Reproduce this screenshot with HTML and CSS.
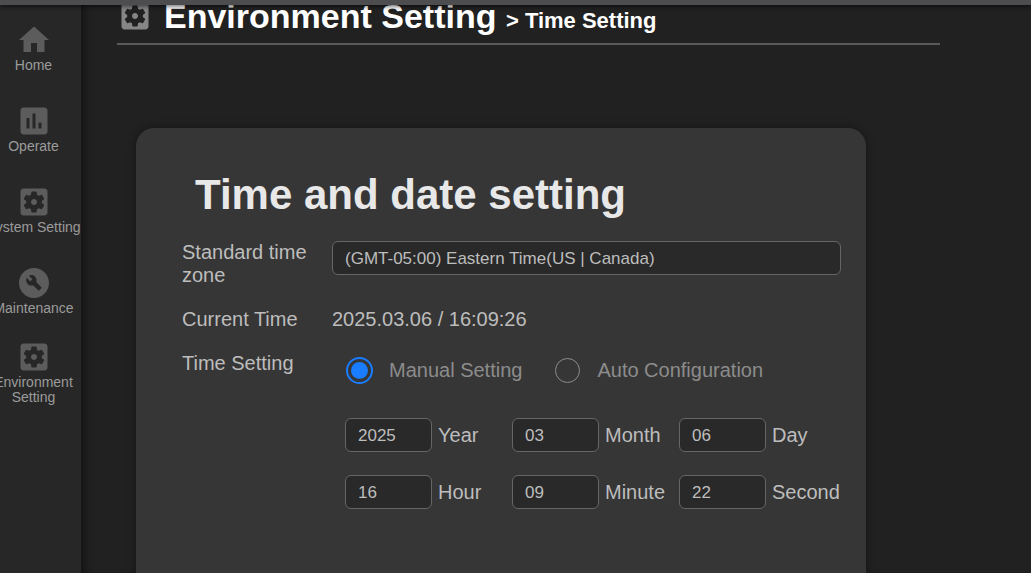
FILE: index.html
```
<!DOCTYPE html>
<html lang="en">
<head>
  <meta charset="UTF-8">
  <meta name="viewport" content="width=device-width, initial-scale=1">
  <title>Time Setting</title>
  <link rel="stylesheet" href="styles.css">
</head>
<body>
  <!-- icons -->
  <svg class="defs" width="0" height="0" aria-hidden="true">
    <symbol id="i-home" viewBox="0 0 24 24">
      <path d="M10 20v-6h4v6h5v-8h3L12 3 2 12h3v8z"/>
    </symbol>
    <symbol id="i-chart" viewBox="0 0 24 24">
      <path d="M19 3H5c-1.1 0-2 .9-2 2v14c0 1.1.9 2 2 2h14c1.1 0 2-.9 2-2V5c0-1.1-.9-2-2-2zM9 17H7v-7h2v7zm4 0h-2V7h2v10zm4 0h-2v-4h2v4z"/>
    </symbol>
    <symbol id="i-gear" viewBox="0 0 24 24">
      <path d="M12 10c-1.100 0-2 .9-2 2s.9 2 2 2 2-.9 2-2-.9-2-2-2zm7-7H5c-1.110 0-2 .9-2 2v14c0 1.100.89 2 2 2h14c1.110 0 2-.9 2-2V5c0-1.100-.89-2-2-2zm-1.750 9c0 .23-.02.46-.05.68l1.480 1.160c.13.11.17.3.08.45l-1.400 2.420c-.09.15-.27.21-.43.15l-1.740-.7c-.36.28-.76.51-1.180.69l-.26 1.850c-.03.17-.18.3-.35.3h-2.800c-.17 0-.32-.13-.35-.29l-.26-1.850c-.43-.18-.82-.41-1.180-.69l-1.740.7c-.16.06-.34 0-.43-.15l-1.400-2.420c-.09-.15-.05-.34.08-.45l1.480-1.160c-.03-.23-.05-.46-.05-.69s.02-.46.05-.68l-1.480-1.160c-.13-.11-.17-.3-.08-.45l1.400-2.420c.09-.15.27-.21.43-.15l1.740.7c.36-.28.76-.51 1.180-.69l.26-1.850c.03-.17.18-.3.35-.3h2.800c.17 0 .32.13.35.29l.26 1.850c.43.18.82.41 1.180.69l1.740-.7c.16-.06.34 0 .43.15l1.400 2.420c.09.15.05.34-.08.45l-1.480 1.160c.03.23.05.46.05.69z"/>
    </symbol>
    <symbol id="i-build" viewBox="0 0 24 24">
      <path fill-rule="evenodd" d="M12 2C6.480 2 2 6.480 2 12s4.480 10 10 10 10-4.480 10-10S17.520 2 12 2zm4.900 13.490-1.400 1.400c-.2.2-.51.2-.71 0l-3.410-3.410c-1.220.43-2.640.17-3.620-.81-1.110-1.110-1.300-2.790-.59-4.100l2.350 2.350 1.410-1.410-2.350-2.350c1.320-.71 2.990-.52 4.100.59.98.98 1.240 2.400.81 3.620l3.410 3.410c.19.19.19.51 0 .71z"/>
    </symbol>
  </svg>

  <div class="topbar"></div>

  <div class="layout">
    <nav class="sidebar">
      <div class="menu">
        <a href="#home"><svg class="icon"><use href="#i-home"/></svg>Home</a>
        <a href="#operate"><svg class="icon"><use href="#i-chart"/></svg>Operate</a>
        <a href="#system"><svg class="icon"><use href="#i-gear"/></svg>System Setting</a>
        <a href="#maintenance"><svg class="icon"><use href="#i-build"/></svg>Maintenance</a>
        <a href="#environment"><svg class="icon"><use href="#i-gear"/></svg>Environment Setting</a>
      </div>
    </nav>

    <main class="content">
      <header class="page-head">
        <svg class="icon"><use href="#i-gear"/></svg>
        <h1>Environment Setting <span>&gt; Time Setting</span></h1>
      </header>

      <form class="card">
        <h2>Time and date setting</h2>

        <div class="row">
          <label for="timezone">Standard time zone</label>
          <select id="timezone">
            <option>(GMT-05:00) Eastern Time(US | Canada)</option>
          </select>
        </div>

        <div class="row">
          <span>Current Time</span>
          <span>2025.03.06 / 16:09:26</span>
        </div>

        <div class="row">
          <span>Time Setting</span>
          <div class="time-setting">
            <div class="modes">
              <label><input type="radio" name="mode" checked>Manual Setting</label>
              <label><input type="radio" name="mode">Auto Configuration</label>
            </div>
            <div class="fields">
              <label><input type="text" value="2025">Year</label>
              <label><input type="text" value="03">Month</label>
              <label><input type="text" value="06">Day</label>
              <label><input type="text" value="16">Hour</label>
              <label><input type="text" value="09">Minute</label>
              <label><input type="text" value="22">Second</label>
            </div>
          </div>
        </div>
      </form>
    </main>
  </div>
</body>
</html>
```
FILE: styles.css
```
* {
  box-sizing: border-box;
}
body {
  margin: 0;
  background-color: #212121;
  color: #bdbdbd;
  font-family: Arial, "Liberation Sans", sans-serif;
  font-size: 20px;
  line-height: 23px;
}
.defs {
  position: absolute;
}
.icon {
  display: block;
  width: 36px;
  height: 36px;
  flex-shrink: 0;
  fill: #5c5c5c;
}

/* top bar stays over the scrolled page */
.topbar {
  position: fixed;
  top: 0;
  left: 0;
  right: 0;
  z-index: 2;
  height: 5px;
  background-color: #4d4d4f;
  box-shadow: 0 1px 5px rgba(0,0,0,0.7);
}
.layout {
  display: flex;
  height: 100vh;
}

/* sidebar */
.sidebar {
  display: flex;
  justify-content: flex-end;
  width: 81px;
  flex-shrink: 0;
  padding-top: 7px;
  overflow: hidden;
  background-color: #272727;
}
.menu {
  width: 95px;
  flex-shrink: 0;
}
.menu a {
  display: flex;
  flex-direction: column;
  align-items: center;
  justify-content: center;
  height: 81px;
  color: #9b9b9b;
  font-size: 14px;
  line-height: 15px;
  text-align: center;
  text-decoration: none;
}

/* content */
.content {
  flex: 1;
  min-width: 0;
  overflow: auto;
  scrollbar-width: none;
  box-shadow: inset 8px 0 8px -4px rgba(0,0,0,0.4);
}
.page-head {
  display: flex;
  align-items: center;
  gap: 11px;
  margin: -2px 91px 0 36px;
  padding-bottom: 9px;
  border-bottom: 2px solid #5a5a5a;
}
.page-head .icon {
  fill: #868686;
}
.page-head h1 {
  margin: 0;
  color: #fff;
  font-size: 34px;
  line-height: 36px;
}
.page-head span {
  font-size: 22px;
  line-height: 22px;
}

.card {
  margin: 83px 165px 40px 55px;
  padding: 43px 25px 100px 46px;
  border-radius: 18px;
  background-color: #363636;
  box-shadow: 0 0 8px rgba(0,0,0,0.4);
}
.card h2 {
  margin: 0 0 22px 13px;
  color: #e8e8e8;
  font-size: 42px;
  line-height: 48px;
}
.row {
  display: grid;
  grid-template-columns: 150px 1fr;
  align-items: start;
  margin-bottom: 21px;
}
select,
input[type="text"] {
  height: 34px;
  margin: 0;
  padding: 1px 12px 0;
  border: 1px solid #666;
  border-radius: 6px;
  background-color: #292929;
  color: #bdbdbd;
  font-family: inherit;
  font-size: 17px;
  appearance: none;
}
select {
  width: 100%;
}

.modes {
  display: flex;
  gap: 32px;
  padding: 5px 0 34px 14px;
  color: #8c8c8c;
}
.modes label {
  display: flex;
  align-items: center;
  gap: 16px;
}
input[type="radio"] {
  width: 27px;
  height: 27px;
  margin: 0;
  border: 1px solid #8c8c8c;
  border-radius: 50%;
  appearance: none;
}
input[type="radio"]:not(:checked) {
  width: 25px;
  height: 25px;
  margin: 1px;
}
input[type="radio"]:checked {
  border: 2px solid #1a7cff;
  padding: 3px;
  background: #1a7cff content-box;
}

.fields {
  display: grid;
  grid-template-columns: repeat(3, 167px);
  row-gap: 23px;
  padding-left: 13px;
}
.fields label {
  display: flex;
  align-items: center;
  gap: 6px;
}
.fields input {
  width: 87px;
}
```
